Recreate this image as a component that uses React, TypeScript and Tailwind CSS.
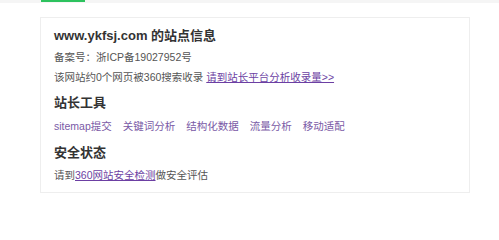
export default function App() {
  const tools = ['sitemap提交', '关键词分析', '结构化数据', '流量分析', '移动适配']

  return (
    <div
      className="w-[499px] h-[228px] bg-white"
      style={{ fontFamily: '"Liberation Sans", Arial, "Noto Sans CJK SC", sans-serif' }}
    >
      {/* top tab strip */}
      <div className="h-[3px] bg-[#f5f5f5] pl-[41px]">
        <div className="w-[44px] h-[2px] bg-[#2dc25e]" />
      </div>

      <div className="ml-[40px] mt-[14px] w-[430px] border border-[#eeeeee] px-[13px] pt-[8px] pb-[7px] text-[#333]">
        <h2 className="text-[13px] leading-[20px] font-bold">www.ykfsj.com 的站点信息</h2>
        <p className="mt-[1px] text-[10.5px] leading-[20px] text-[#555]">备案号：浙ICP备19027952号</p>
        <p className="text-[10.5px] leading-[20px] text-[#555]">
          该网站约0个网页被360搜索收录{' '}
          <a href="#" className="text-[#6c3fa3] underline">请到站长平台分析收录量&gt;&gt;</a>
        </p>

        <h2 className="mt-[6px] text-[13px] leading-[20px] font-bold">站长工具</h2>
        <div className="mt-[3px] flex gap-[11px] text-[10.5px] leading-[20px]">
          {tools.map((t) => (
            <a key={t} href="#" className="text-[#7a5aa6]">
              {t}
            </a>
          ))}
        </div>

        <h2 className="mt-[7px] text-[13px] leading-[20px] font-bold">安全状态</h2>
        <p className="mt-[2px] text-[10.5px] leading-[20px] text-[#555]">
          请到<a href="#" className="text-[#6c3fa3] underline">360网站安全检测</a>做安全评估
        </p>
      </div>
    </div>
  )
}
